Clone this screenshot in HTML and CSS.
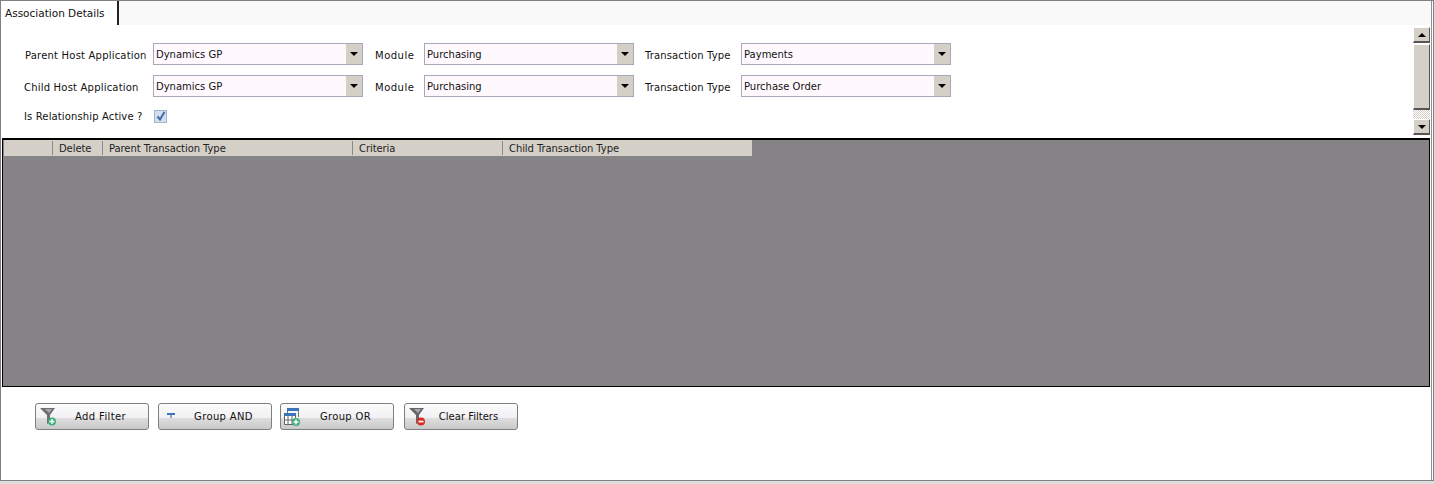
FILE: index.html
```html
<!DOCTYPE html>
<html lang="en">
<head>
<meta charset="utf-8">
<title>Association Details</title>
<link rel="stylesheet" href="styles.css">
</head>
<body>
<div class="frame">
  <div class="tabstrip">
    <div class="tab">Association Details</div>
  </div>
  <div class="panel">
    <div class="form">
      <div class="row">
        <label class="label label-host label-parent">Parent Host Application</label>
        <div class="combo combo-host"><span class="combo-value">Dynamics GP</span><span class="combo-btn"><i class="arrow-down"></i></span></div>
        <label class="label label-module">Module</label>
        <div class="combo combo-module"><span class="combo-value">Purchasing</span><span class="combo-btn"><i class="arrow-down"></i></span></div>
        <label class="label label-type">Transaction Type</label>
        <div class="combo combo-type"><span class="combo-value">Payments</span><span class="combo-btn"><i class="arrow-down"></i></span></div>
      </div>
      <div class="row">
        <label class="label label-host">Child Host Application</label>
        <div class="combo combo-host"><span class="combo-value">Dynamics GP</span><span class="combo-btn"><i class="arrow-down"></i></span></div>
        <label class="label label-module">Module</label>
        <div class="combo combo-module"><span class="combo-value">Purchasing</span><span class="combo-btn"><i class="arrow-down"></i></span></div>
        <label class="label label-type">Transaction Type</label>
        <div class="combo combo-type"><span class="combo-value">Purchase Order</span><span class="combo-btn"><i class="arrow-down"></i></span></div>
      </div>
      <div class="row row-check">
        <label class="label label-host">Is Relationship Active ?</label>
        <span class="check">
          <svg width="10" height="10" viewBox="0 0 10 10"><path d="M1.5 5.5 L4 8.5 L8.5 1" fill="none" stroke="#3f6cab" stroke-width="2"/></svg>
        </span>
      </div>
    </div>
    <div class="scrollbar">
      <div class="sb-btn"><i class="arrow-up"></i></div>
      <div class="sb-thumb"></div>
      <div class="sb-track"></div>
      <div class="sb-btn"><i class="arrow-down"></i></div>
    </div>
  </div>
  <div class="grid">
    <div class="grid-head">
      <div class="col col-sel"></div>
      <div class="col col-del">Delete</div>
      <div class="col col-parent">Parent Transaction Type</div>
      <div class="col col-crit">Criteria</div>
      <div class="col col-child">Child Transaction Type</div>
    </div>
  </div>
  <div class="actions">
    <button class="btn" type="button">
      <svg class="btn-icon" width="18" height="18" viewBox="0 0 18 18"><path d="M0 0 H15 L10 7 V14 L7 16 V7 Z" fill="#6f6f72"/><path d="M5 1 H12 L9 5 Z" fill="#a9a9ab"/><circle cx="12" cy="13.5" r="4" fill="#3fae7c"/><path d="M12 11 V16 M9.5 13.5 H14.5" stroke="#fff" stroke-width="1.5"/></svg>
      <span class="btn-text">Add Filter</span>
    </button>
    <button class="btn" type="button">
      <svg class="btn-icon" width="18" height="18" viewBox="0 0 18 18"><rect x="4" y="5" width="8" height="2" fill="#3d74b8"/><rect x="7" y="7" width="2" height="3" fill="#8fa5c0"/></svg>
      <span class="btn-text">Group AND</span>
    </button>
    <button class="btn btn-or" type="button">
      <svg class="btn-icon btn-icon-or" width="18" height="18" viewBox="0 0 18 18"><rect x="3" y="0" width="12" height="3" fill="#3d74b8"/><path d="M14.5 3 V9 M3.5 3 V5" fill="none" stroke="#777"/><rect x="0" y="5" width="12" height="3" fill="#3d74b8"/><path d="M0.5 8 V16.5 H11.5 V8 M4 8 V16 M8 8 V16 M1 12 H11" fill="#fff" stroke="#666"/><circle cx="12" cy="14" r="4" fill="#3fae7c"/><path d="M12 11.5 V16.5 M9.5 14 H14.5" stroke="#fff" stroke-width="1.5"/></svg>
      <span class="btn-text">Group OR</span>
    </button>
    <button class="btn btn-clear" type="button">
      <svg class="btn-icon" width="18" height="18" viewBox="0 0 18 18"><path d="M0 0 H15 L10 7 V14 L7 16 V7 Z" fill="#66666a"/><path d="M5 1 H12 L9 5 Z" fill="#a9a9ab"/><circle cx="12" cy="13.5" r="4" fill="#d92b1f"/><rect x="9.5" y="12.7" width="5" height="1.7" fill="#fff"/></svg>
      <span class="btn-text btn-text-clear">Clear Filters</span>
    </button>
  </div>
</div>
</body>
</html>
```
FILE: styles.css
```css
* { box-sizing: border-box; }
html, body { margin: 0; padding: 0; background: #dcdcdc; }
body { width: 1435px; height: 484px; overflow: hidden; font-family: "DejaVu Sans", sans-serif; font-size: 10px; color: #111; }
.frame { width: 1434px; height: 481px; background: #fff; border: 1px solid #808080; box-shadow: inset -1px 0 0 #fff, inset -2px 0 0 #909090; display: flex; flex-direction: column; }
.tabstrip { height: 24px; flex: none; background: #f9f9f9; margin-right: 2px; display: flex; }
.tab { width: 118px; height: 24px; padding: 6px 0 0 4px; background: #fff; border-right: 2px solid #222; white-space: nowrap; font-size: 10.5px; }
.panel { height: 113px; flex: none; display: flex; }
.form { flex: 1; padding-top: 18px; display: flex; flex-direction: column; }
.row { display: flex; align-items: center; height: 22px; margin-bottom: 10px; }
.row-check { height: 14px; margin-top: 2px; margin-bottom: 0; }
.label { white-space: nowrap; flex: none; letter-spacing: .2px; padding-top: 2px; }
.row-check .label { padding-top: 0; letter-spacing: .13px; }
.label-host { width: 129px; margin-left: 23px; }
.label-parent { padding-left: 1px; }
.label-module { width: 49px; margin-left: 12px; letter-spacing: .5px; }
.label-type { width: 96px; margin-left: 11px; letter-spacing: .13px; }
.combo { height: 22px; width: 210px; flex: none; display: flex; background: #fff9fe; border: 1px solid #a8a8b8; }
.combo-value { flex: 1; padding: 4px 0 0 2px; line-height: 13px; white-space: nowrap; }
.combo-btn { width: 16px; background: #d4d0c8; display: flex; align-items: center; justify-content: center; }
.arrow-down { display: block; width: 0; height: 0; border-left: 4px solid transparent; border-right: 4px solid transparent; border-top: 4px solid #000; }
.arrow-up { display: block; width: 0; height: 0; border-left: 4px solid transparent; border-right: 4px solid transparent; border-bottom: 4px solid #000; }
.check { width: 13px; height: 13px; margin-left: 1px; background: #d5deec; border: 1px solid #a0b4d0; display: flex; align-items: center; justify-content: center; }
.scrollbar { width: 17px; margin: 2px 3px 0 0; display: flex; flex-direction: column; height: 108px; }
.sb-btn { height: 16px; flex: none; background: #d4d0c8; border-top: 1px solid #fff; border-left: 1px solid #fff; border-right: 1px solid #555; border-bottom: 2px solid #555; display: flex; align-items: center; justify-content: center; }
.sb-thumb { height: 66px; flex: none; margin-top: 1px; background: #d4d0c8; border-top: 1px solid #fff; border-left: 1px solid #fff; border-right: 1px solid #555; border-bottom: 2px solid #555; }
.sb-track { flex: 1; background: repeating-conic-gradient(#d4d0c8 0 25%, #fff 0 50%) 0 0 / 2px 2px; }
.grid { height: 249px; flex: none; margin: 0 3px 0 1px; background: #858385; border: 1px solid #000; border-top-width: 2px; padding-left: 1px; }
.grid-head { display: flex; width: 748px; height: 16px; background: #d4d0c8; color: #222; letter-spacing: -.08px; }
.col { flex: none; height: 14px; line-height: 15px; margin-top: 1px; padding-left: 6px; border-right: 1px solid #8a8a8a; white-space: nowrap; }
.col-sel { width: 49px; }
.col-del { width: 50px; }
.col-parent { width: 250px; }
.col-crit { width: 150px; }
.col-child { width: 249px; border-right: 0; }
.actions { display: flex; gap: 9px; padding: 16px 0 0 34px; }
.btn { width: 114px; height: 27px; flex: none; padding: 0; position: relative; font: inherit; color: #111; border: 1px solid #7f7f7f; border-radius: 3px; background: linear-gradient(#fbfbfb 0, #f2f0f3 55%, #dedede 56%, #c9c9c9 100%); }
.btn-or { margin-left: -1px; }
.btn-clear { margin-left: 1px; }
.btn-icon { position: absolute; left: 4px; top: 4px; }
.btn-icon-or { left: 3px; }
.btn-text { display: block; text-align: center; padding-left: 17px; line-height: 24px; letter-spacing: .35px; }
.btn-text-clear { letter-spacing: 0; padding-left: 15px; }
```
